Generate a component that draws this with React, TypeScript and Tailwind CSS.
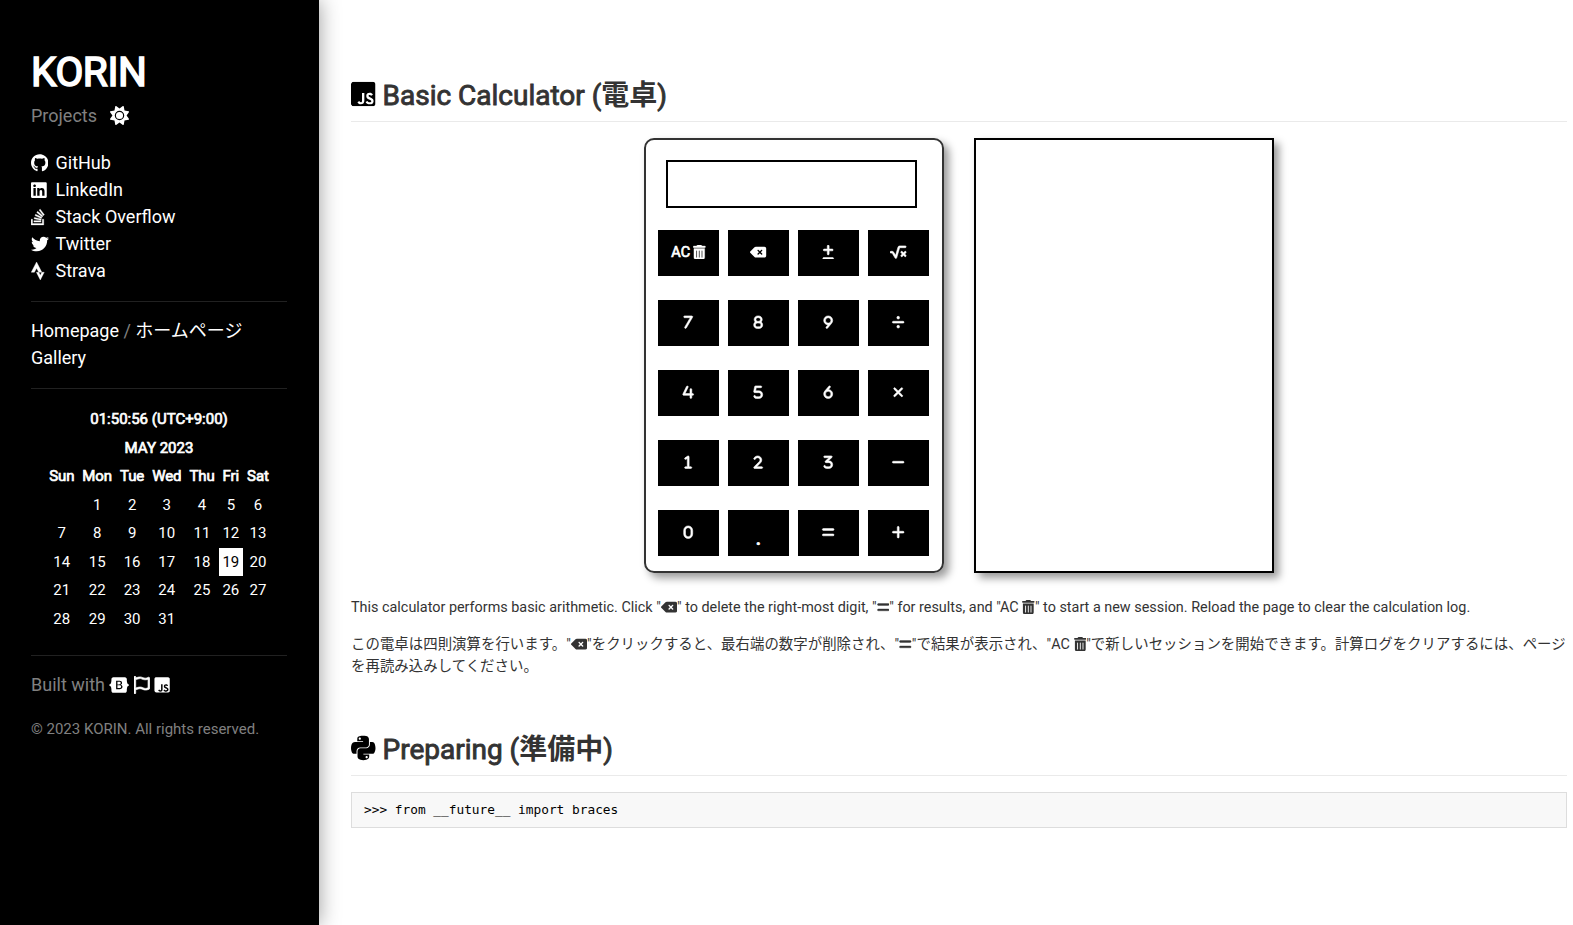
import React from "react";
import { FaGithub, FaLinkedin, FaStackOverflow, FaTwitter, FaStrava, FaBootstrap, FaRegFlag, FaSun, FaDeleteLeft, FaTrashCan, FaSquareRootVariable, FaPlusMinus, FaPython, FaDivide, FaXmark, FaMinus, FaPlus, FaEquals, Fa0, Fa1, Fa2, Fa3, Fa4, Fa5, Fa6, Fa7, Fa8, Fa9 } from "react-icons/fa6";
import { FaJsSquare } from "react-icons/fa";

const links = [
  { icon: <FaGithub className="w-[0.969em]" />, label: "GitHub" },
  { icon: <FaLinkedin className="w-[0.875em]" />, label: "LinkedIn" },
  { icon: <FaStackOverflow className="w-[0.75em] stroke-current stroke-[10]" />, label: "Stack Overflow" },
  { icon: <FaTwitter />, label: "Twitter" },
  { icon: <FaStrava className="w-[0.75em] stroke-current stroke-[10]" />, label: "Strava" },
];

const weeks = [
  ["", "1", "2", "3", "4", "5", "6"],
  ["7", "8", "9", "10", "11", "12", "13"],
  ["14", "15", "16", "17", "18", "19", "20"],
  ["21", "22", "23", "24", "25", "26", "27"],
  ["28", "29", "30", "31", "", "", ""],
];

const k = "stroke-current stroke-[20]";

const keys = [
  <span className="flex items-center gap-[3px] pt-[1px] [-webkit-text-stroke:0.7px]">AC<FaTrashCan className="mb-[1px] w-[0.875em] stroke-current stroke-[10]" /></span>,
  <FaDeleteLeft className="w-[1.125em]" />, <FaPlusMinus className={k} />, <FaSquareRootVariable className="w-[1.125em] stroke-current stroke-[20]" />,
  <Fa7 className={k} />, <Fa8 className={k} />, <Fa9 className={k} />, <FaDivide className={k} />,
  <Fa4 className={k} />, <Fa5 className={k} />, <Fa6 className={k} />, <FaXmark className={k} />,
  <Fa1 className={k} />, <Fa2 className={k} />, <Fa3 className={k} />, <FaMinus className={k} />,
  <Fa0 className={k} />, <span className="pt-[9px] text-[24px] leading-none [-webkit-text-stroke:0.6px]">.</span>, <FaEquals className={k} />, <FaPlus className={k} />,
];

const Delete = () => <FaDeleteLeft className="inline-block w-[1.125em] align-[-2px]" />;
const Equals = () => <FaEquals className="inline-block w-[0.875em] stroke-current stroke-[14] align-[-2px]" />;
const Trash = () => <FaTrashCan className="inline-block w-[0.875em] align-[-2px]" />;

function Sidebar() {
  return (
    <aside className="w-[319px] shrink-0 bg-black pl-[31px] pr-[32px] pt-[51px] text-[18px] leading-[27px] text-white shadow-[0_0_20px_rgba(0,0,0,0.4)]">
      <h1 className="text-[40.5px] font-normal leading-[42px] tracking-[-0.4px] [-webkit-text-stroke:1.6px]">KORIN</h1>
      <p className="mt-[9px] flex items-center gap-[13px] text-[#808080]">Projects <FaSun className="text-[19px] text-white" /></p>
      <ul className="mt-[20px]">
        {links.map((l) => (
          <li key={l.label} className="flex items-center"><span className="w-[24.5px]">{l.icon}</span>{l.label}</li>
        ))}
      </ul>
      <hr className="mt-[17px] border-[#212121]" />
      <nav className="mt-[15px]">
        <p>Homepage <span className="text-[#808080]">/</span> ホームページ</p>
        <p>Gallery</p>
      </nav>
      <hr className="mt-[17px] border-[#212121]" />
      <div className="mt-[16px] text-center text-[15px] leading-[28.5px] [-webkit-text-stroke:0.7px]">
        <p>01:50:56 (UTC+9:00)</p>
        <p>MAY 2023</p>
      </div>
      <table className="mx-auto text-center text-[15px] leading-[28.5px]">
        <thead>
          <tr>{["Sun", "Mon", "Tue", "Wed", "Thu", "Fri", "Sat"].map((d) => <th key={d} className="px-1 py-0 font-normal tracking-[-0.1px] [-webkit-text-stroke:0.7px]">{d}</th>)}</tr>
        </thead>
        <tbody>
          {weeks.map((w, i) => (
            <tr key={i}>{w.map((d, j) => <td key={j} className={d === "19" ? "bg-white p-0 text-black" : "p-0"}>{d}</td>)}</tr>
          ))}
        </tbody>
      </table>
      <hr className="mt-[22px] border-[#212121]" />
      <p className="mt-[15px] flex items-center text-[#808080]">Built with<span className="ml-[4.5px] flex gap-[4.5px] text-white"><FaBootstrap className="w-[1.125em]" /><FaRegFlag className="w-[0.875em] stroke-current stroke-[20]" /><FaJsSquare className="w-[0.875em] [clip-path:inset(6.25%_0_round_2px)]" /></span></p>
      <p className="mt-[18px] text-[15px] text-[#808080]">© 2023 KORIN. All rights reserved.</p>
    </aside>
  );
}

export default function App() {
  return (
    <div className="flex h-[925px] overflow-hidden bg-white font-['Roboto','Noto_Sans_CJK_JP',sans-serif] text-[#333]">
      <Sidebar />
      <main className="ml-[32px] w-[1216px] pt-[78px]">
        <h2 className="flex h-[44px] items-start border-b border-[#eaeaea] text-[28px] font-normal leading-[35px] [-webkit-text-stroke:0.9px]"><FaJsSquare className="mr-[7px] mt-[2px] w-[0.875em] text-black [clip-path:inset(6.25%_0_round_2px)]" />Basic Calculator (<span className="font-bold [-webkit-text-stroke:0]">電卓</span>)</h2>
        <div className="mt-[16px] flex justify-center gap-[30px]">
          <div className="h-[435px] w-[300px] rounded-[10px] border-2 border-[#333] px-[12px] pt-[20px] shadow-[5px_5px_8px_rgba(0,0,0,0.4)]">
            <div className="ml-[8px] h-[48px] w-[251px] border-2 border-black" />
            <div className="mt-[22px] grid grid-cols-[repeat(4,61px)] gap-x-[9px] gap-y-[24px]">
              {keys.map((key, i) => <div key={i} className="flex h-[46px] items-center justify-center bg-black pb-[2px] text-[14.4px] text-white">{key}</div>)}
            </div>
          </div>
          <div className="h-[435px] w-[300px] border-2 border-black shadow-[5px_5px_8px_rgba(0,0,0,0.4)]" />
        </div>
        <p className="mt-[24px] text-[14.4px] leading-[22px]">This calculator performs basic arithmetic. Click "<Delete />" to delete the right-most digit, "<Equals />" for results, and "AC <Trash />" to start a new session. Reload the page to clear the calculation log.</p>
        <p className="mt-[15px] text-[14.4px] leading-[22px] tracking-[0.05px]">この電卓は四則演算を行います。"<Delete />"をクリックすると、最右端の数字が削除され、"<Equals />"で結果が表示され、"AC <Trash />"で新しいセッションを開始できます。計算ログをクリアするには、ページを再読み込みしてください。</p>
        <h2 className="mt-[54px] flex h-[44px] items-start border-b border-[#eaeaea] text-[28px] font-normal leading-[35px] [-webkit-text-stroke:0.9px]"><FaPython className="mr-[7px] mt-[2px] w-[0.875em] text-black" />Preparing (<span className="font-bold [-webkit-text-stroke:0]">準備中</span>)</h2>
        <pre className="mt-[16px] h-[36px] border border-[#ddd] bg-[#f8f8f8] px-[12px] font-['DejaVu_Sans_Mono',monospace] text-[12.8px] leading-[33px] text-black">{">>> from __future__ import braces"}</pre>
      </main>
    </div>
  );
}
